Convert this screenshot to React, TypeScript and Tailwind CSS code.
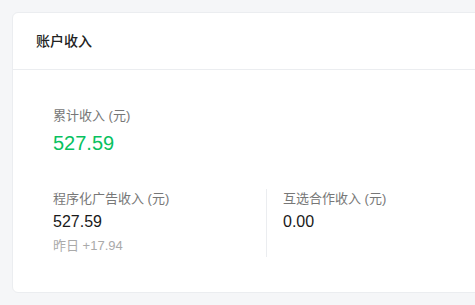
const App = () => {
  return (
    <div
      className="h-[305px] w-[475px] overflow-hidden bg-[#f5f6f8] pl-3 pt-3"
      style={{ fontFamily: '"Liberation Sans", "Noto Sans CJK SC", sans-serif' }}
    >
      <div className="h-[281px] w-[520px] rounded-md border border-[#ebedf0] bg-white">
        <div className="flex h-[57px] items-center border-b border-[#ebedf0] pl-[23px]">
          <h2 className="text-[14px] font-medium text-[#222]">账户收入</h2>
        </div>

        <div className="pl-10 pt-[36px]">
          <div>
            <p className="text-[13px] leading-5 text-[#777]">累计收入 (元)</p>
            <p className="mt-[3px] text-[20px] leading-7 text-[#07c160]">527.59</p>
          </div>

          <div className="mt-8 flex">
            <div className="w-[213px]">
              <p className="text-[13px] leading-5 text-[#777]">程序化广告收入 (元)</p>
              <p className="mt-px text-[16px] leading-6 text-[#1a1a1a]">527.59</p>
              <p className="mt-[2px] text-[13px] leading-5 text-[#aaa]">昨日 +17.94</p>
            </div>
            <div className="h-[68px] border-l border-[#ebedf0] pl-4">
              <p className="text-[13px] leading-5 text-[#777]">互选合作收入 (元)</p>
              <p className="mt-px text-[16px] leading-6 text-[#1a1a1a]">0.00</p>
            </div>
          </div>
        </div>
      </div>
    </div>
  );
};

export default App;
